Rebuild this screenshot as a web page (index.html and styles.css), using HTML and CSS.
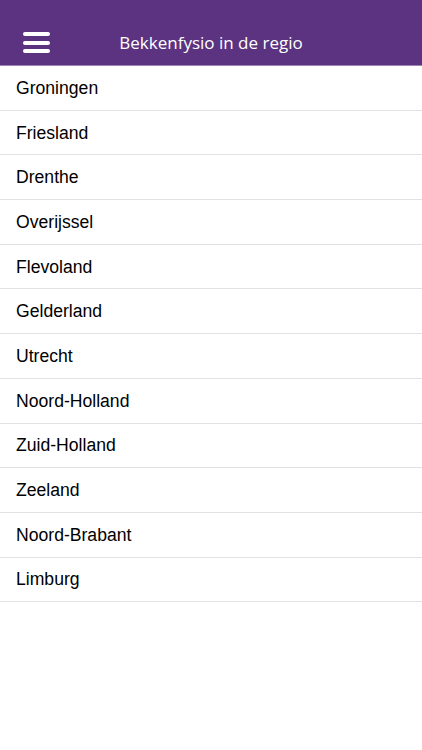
FILE: index.html
```html
<!DOCTYPE html>
<html lang="nl">
<head>
<meta charset="utf-8">
<title>Bekkenfysio in de regio</title>
<link rel="stylesheet" href="styles.css">
</head>
<body>
<header class="topbar">
  <button class="menu" aria-label="Menu">
    <span class="bar"></span><span class="bar"></span><span class="bar"></span>
  </button>
  <h1 class="title">Bekkenfysio in de regio</h1>
</header>
<ul class="list">
  <li class="item">Groningen</li>
  <li class="item">Friesland</li>
  <li class="item">Drenthe</li>
  <li class="item">Overijssel</li>
  <li class="item">Flevoland</li>
  <li class="item">Gelderland</li>
  <li class="item">Utrecht</li>
  <li class="item">Noord-Holland</li>
  <li class="item">Zuid-Holland</li>
  <li class="item">Zeeland</li>
  <li class="item">Noord-Brabant</li>
  <li class="item">Limburg</li>
</ul>
</body>
</html>
```
FILE: styles.css
```css
* { box-sizing: border-box; }
html, body { margin: 0; padding: 0; background: #fff; }
body { width: 422px; height: 750px; overflow: hidden; }

.topbar {
  position: relative;
  height: 66px;
  background: #5b3380;
  border-bottom: 1px solid #9c86b4;
  display: flex;
  align-items: flex-end;
  justify-content: center;
  padding-bottom: 10px;
}
.menu {
  position: absolute;
  left: 23px;
  top: 32px;
  width: 27px;
  height: 21px;
  padding: 0;
  border: 0;
  background: transparent;
  display: flex;
  flex-direction: column;
  justify-content: space-between;
}
.bar {
  display: block;
  width: 27px;
  height: 4px;
  border-radius: 2px;
  background: #fff;
}
.title {
  margin: 0;
  font-family: "Open Sans", sans-serif;
  font-weight: 400;
  font-size: 17px;
  line-height: 24px;
  color: #fff;
}
.list {
  list-style: none;
  margin: 0;
  padding: 0;
}
.item {
  height: 44.7px;
  border-bottom: 1px solid #e2e2e2;
  padding-left: 16px;
  padding-top: 1px;
  display: flex;
  align-items: center;
  font-family: "Liberation Sans", Arial, sans-serif;
  font-size: 17.6px;
  color: #000;
}
```
